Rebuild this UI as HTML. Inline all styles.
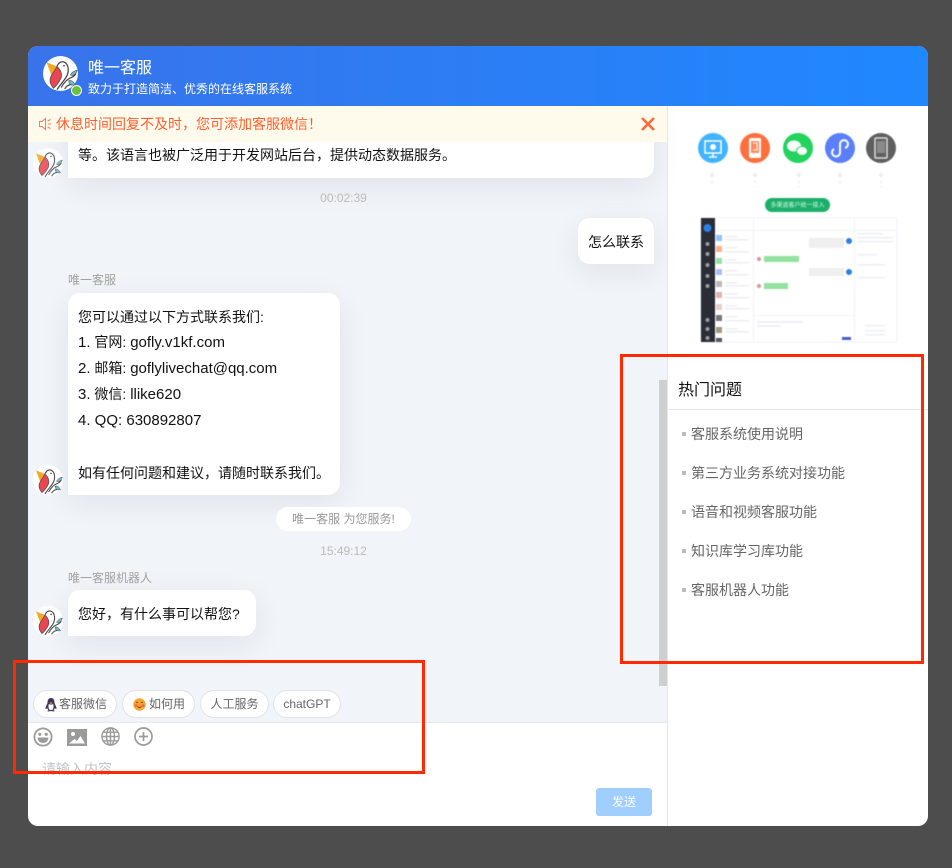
<!DOCTYPE html>
<html lang="zh"><head><meta charset="utf-8"><title>唯一客服</title>
<style>
*{box-sizing:border-box;margin:0;padding:0}
html,body{width:952px;height:868px;overflow:hidden;background:#4d4d4d;font-family:"Liberation Sans","Noto Sans CJK SC",sans-serif}
.a{position:absolute;white-space:nowrap}
#win{position:absolute;left:28px;top:46px;width:900px;height:780px;border-radius:10px;overflow:hidden;background:#fff}
.t{position:absolute;white-space:nowrap;line-height:20px}
.t b{font-weight:400;font-size:15px}
.bub{position:absolute;background:#fff;box-shadow:0 8px 30px rgba(30,50,90,.08);font-size:14px;color:#111}
.time{position:absolute;left:0;width:631px;text-align:center;font-size:12px;color:#bbb;line-height:16px}
.name{position:absolute;left:40px;font-size:12px;color:#a3a3a3;line-height:16px;white-space:nowrap}
.chip{position:absolute;top:644px;height:28px;border:1px solid #dfe3ea;border-radius:14px;background:#fff;font-size:12px;color:#666;line-height:26px;white-space:nowrap}
.q{position:absolute;left:663px;font-size:14px;color:#666;line-height:20px;white-space:nowrap}
.q:before{content:"";position:absolute;left:-9px;top:8px;width:4px;height:4px;background:#bbb}
.rb{position:absolute;border:3px solid #ff2a00}
</style></head><body>
<svg width="0" height="0" style="position:absolute"><defs>
<symbol id="bird" viewBox="0 0 100 100">
<circle cx="50" cy="50" r="50" fill="#fff"/>
<path d="M10 18L40 30L26 60Z" fill="#f7a823"/>
<path d="M40 30Q56 44 52 62Q44 80 30 92Q14 74 24 56Z" fill="#ea4552" stroke="#444" stroke-width="2"/>
<path d="M40 30Q46 14 60 17Q70 21 72 36Q74 54 58 72Q48 84 40 96" fill="none" stroke="#444" stroke-width="3.5"/>
<circle cx="60" cy="28" r="2.5" fill="#444"/>
<path d="M52 90Q64 68 80 62Q90 58 94 50M62 94Q70 80 84 82" fill="none" stroke="#444" stroke-width="3.5"/>
<path d="M78 54Q86 42 98 40Q94 54 84 56Z" fill="#72b6d4" stroke="#444" stroke-width="1.5"/>
<path d="M74 70Q84 68 92 82Q80 86 74 76Z" fill="#72b6d4" stroke="#444" stroke-width="1.5"/>
</symbol>
</defs></svg>
<div id="win">
<!-- chat area -->
<div style="position:absolute;left:0;top:60px;width:640px;height:617px;background:#f1f4f8"></div>

<div class="bub" style="left:40px;top:60px;width:586px;height:72px;border-radius:0 0 12px 0"><div class="t" style="left:10px;top:39px">等。该语言也被广泛用于开发网站后台，提供动态数据服务。</div></div>
<svg class="a" style="left:5px;top:102px;opacity:.85" width="30" height="30"><use href="#bird"/></svg>
<div class="time" style="top:144px">00:02:39</div>

<div class="bub" style="left:550px;top:172px;width:76px;height:46px;border-radius:12px 12px 0 12px"><div class="t" style="left:10px;top:14px">怎么联系</div></div>

<div class="name" style="top:226px">唯一客服</div>
<div class="bub" style="left:40px;top:247px;width:272px;height:202px;border-radius:12px 12px 12px 0">
<div class="t" style="left:10px;top:14px">您可以通过以下方式联系我们:</div>
<div class="t" style="left:10px;top:39px"><b>1.</b> 官网: <b>gofly.v1kf.com</b></div>
<div class="t" style="left:10px;top:65px"><b>2.</b> 邮箱: <b>goflylivechat@qq.com</b></div>
<div class="t" style="left:10px;top:91px"><b>3.</b> 微信: <b>llike620</b></div>
<div class="t" style="left:10px;top:117px"><b>4. QQ: 630892807</b></div>
<div class="t" style="left:10px;top:170px">如有任何问题和建议，请随时联系我们。</div>
</div>
<svg class="a" style="left:5px;top:419px" width="30" height="30"><use href="#bird"/></svg>

<div class="a" style="left:248px;top:461px;width:135px;height:24px;border-radius:12px;background:#fff;font-size:12px;color:#999;text-align:center;line-height:24px">唯一客服 为您服务!</div>
<div class="time" style="top:497px">15:49:12</div>

<div class="name" style="top:524px">唯一客服机器人</div>
<div class="bub" style="left:40px;top:544px;width:188px;height:46px;border-radius:12px 12px 12px 0"><div class="t" style="left:10px;top:14px">您好，有什么事可以帮您?</div></div>
<svg class="a" style="left:5px;top:560px" width="30" height="30"><use href="#bird"/></svg>

<!-- scrollbar -->
<div class="a" style="left:631px;top:334px;width:8px;height:306px;background:#cfcfcf"></div>

<!-- header -->
<div style="position:absolute;left:0;top:0;width:900px;height:60px;background:linear-gradient(90deg,#3973ea,#1f88ff)"></div>
<svg class="a" style="left:15px;top:10px" width="35" height="35"><use href="#bird"/></svg>
<div class="a" style="left:43px;top:39px;width:11px;height:11px;border-radius:50%;background:#6cc13c;border:1px solid #fff"></div>
<div class="t" style="left:60px;top:11px;font-size:16px;line-height:24px;color:#fff">唯一客服</div>
<div class="t" style="left:60px;top:33px;font-size:12px;color:#fff">致力于打造简洁、优秀的在线客服系统</div>

<!-- notice -->
<div style="position:absolute;left:0;top:60px;width:640px;height:36px;background:#fffbec"></div>
<svg class="a" style="left:10px;top:71px" width="14" height="14" viewBox="0 0 14 14" fill="none" stroke="#ff7a50" stroke-width="1"><path d="M1.5 4.5H4L7.5 1.5V12.5L4 9.5H1.5Z"/><path d="M9.5 4L12.5 2.5M9.5 7H13M9.5 10L12.5 11.5"/></svg>
<div class="t" style="left:28px;top:68px;font-size:14px;color:#ff5f2e">休息时间回复不及时，您可添加客服微信！</div>
<svg class="a" style="left:612px;top:71px" width="16" height="14" viewBox="0 0 16 14"><path d="M2 1L14 13M14 1L2 13" stroke="#ff6a3a" stroke-width="2.6"/></svg>

<!-- chips -->
<div class="chip" style="left:5px;width:84px;padding-left:25px">客服微信</div>
<svg class="a" style="left:16px;top:651px" width="14" height="15" viewBox="0 0 14 15"><path d="M7 1C4.5 1 3.5 3 3.500 5.500C3.500 7 1.500 9.500 1.500 11.500C1.500 12.500 2.500 12 3.200 11C3.500 12 4 12.700 4.600 13.200C3.500 13.500 3 14 3.500 14.300C5 14.700 6 14 7 14C8 14 9 14.700 10.500 14.300C11 14 10.500 13.500 9.400 13.200C10 12.700 10.500 12 10.800 11C11.500 12 12.500 12.500 12.500 11.500C12.500 9.500 10.500 7 10.500 5.500C10.500 3 9.500 1 7 1Z" fill="#3f3560"/><path d="M4.800 7Q7 8.200 9.200 7Q10 10 8.800 12.500Q7 13.500 5.200 12.500Q4 10 4.800 7Z" fill="#fff"/><path d="M5.500 6L7 5.200L8.500 6L7 7Z" fill="#f5a623"/></svg>
<div class="chip" style="left:94px;width:73px;padding-left:26px">如何用</div>
<svg class="a" style="left:105px;top:652px" width="13" height="13" viewBox="0 0 13 13"><circle cx="6.500" cy="6.500" r="6.200" fill="#f8a433"/><circle cx="3" cy="7.500" r="1.400" fill="#f2674a"/><circle cx="10" cy="7.500" r="1.400" fill="#f2674a"/><path d="M3 4.800Q4 3.600 5 4.800M8 4.800Q9 3.600 10 4.800M4.500 8.500Q6.500 10.500 8.500 8.500" fill="none" stroke="#7a4310" stroke-width=".9"/></svg>
<div class="chip" style="left:172px;width:69px;text-align:center">人工服务</div>
<div class="chip" style="left:245px;width:68px;text-align:center">chatGPT</div>

<!-- input -->
<div style="position:absolute;left:0;top:676px;width:640px;height:1px;background:#e8e8e8"></div>
<svg class="a" style="left:5px;top:681px" width="20" height="20" viewBox="0 0 20 20" fill="none"><circle cx="10" cy="10" r="8.600" stroke="#9b9b9b" stroke-width="1.800"/><circle cx="6.800" cy="7.300" r="1.600" fill="#9b9b9b"/><circle cx="13.200" cy="7.300" r="1.600" fill="#9b9b9b"/><path d="M4.500 10.500H15.500Q15 16 10 16Q5 16 4.500 10.500Z" fill="#9b9b9b"/></svg>
<svg class="a" style="left:39px;top:683px" width="20" height="17" viewBox="0 0 20 17"><path d="M0 0H20V17H0Z" fill="#9b9b9b"/><circle cx="6" cy="5" r="2" fill="#fff"/><path d="M2 14.500L7.500 10L10 12L13.500 7L18 14.500Z" fill="#fff"/></svg>
<svg class="a" style="left:73px;top:681px" width="19" height="19" viewBox="0 0 19 19" fill="none" stroke="#9b9b9b" stroke-width="1.400"><circle cx="9.500" cy="9.500" r="8.600"/><ellipse cx="9.500" cy="9.500" rx="4" ry="8.600"/><path d="M9.500 1V18M1 9.500H18M2.200 5.200H16.800M2.200 13.800H16.800"/></svg>
<svg class="a" style="left:106px;top:681px" width="19" height="19" viewBox="0 0 19 19" fill="none" stroke="#9b9b9b" stroke-width="1.700"><circle cx="9.500" cy="9.500" r="8.500"/><path d="M9.500 5V14M5 9.500H14"/></svg>
<div class="t" style="left:14px;top:713px;font-size:14px;color:#c0c4cc">请输入内容</div>
<div class="a" style="left:568px;top:742px;width:56px;height:28px;border-radius:3px;background:#a0cfff;color:#fff;font-size:12px;text-align:center;line-height:28px">发送</div>

<!-- right panel -->
<div style="position:absolute;left:639px;top:60px;width:1px;height:720px;background:#e6e6e6"></div>
<svg class="a" style="left:640px;top:60px;filter:blur(.5px)" width="260" height="250" viewBox="668 106 260 250">
<circle cx="713" cy="148" r="15" fill="#40b4ff"/><circle cx="755" cy="148" r="15" fill="#ff6f3c"/><circle cx="798" cy="148" r="15" fill="#22d35d"/><circle cx="840" cy="148" r="15" fill="#5a7ffa"/><circle cx="881" cy="148" r="15" fill="#5f5f5f"/>
<path d="M705 141H721V153H705Z" fill="none" stroke="#fff" stroke-width="1.500"/><circle cx="713" cy="147" r="3" fill="#fff"/><path d="M709 157H717M713 153V157" stroke="#fff" stroke-width="1.500"/>
<rect x="749" y="138" width="12" height="20" rx="1.500" fill="#fff"/><rect x="751" y="141" width="8" height="12" fill="#ff8a60"/><path d="M753 143H757V150H753" fill="none" stroke="#fff"/>
<ellipse cx="794" cy="146" rx="7" ry="5.500" fill="#fff"/><ellipse cx="802" cy="151" rx="5.500" ry="4.500" fill="#fff" stroke="#22d35d"/>
<path d="M834 149a4 4 0 1 0 6 4v-9a4 4 0 1 1 5 4" fill="none" stroke="#fff" stroke-width="2"/>
<rect x="875" y="138" width="12" height="20" rx="1" fill="none" stroke="#ddd" stroke-width="1.500"/><rect x="877" y="141" width="8" height="12" fill="#8a8a8a"/>
<g fill="#eee"><circle cx="712" cy="175" r="2.200"/><circle cx="755" cy="175" r="2.200"/><circle cx="799" cy="175" r="2.200"/><circle cx="840" cy="175" r="2.200"/><circle cx="881" cy="175" r="2.200"/><circle cx="712" cy="182" r="1.200"/><circle cx="755" cy="182" r="1.200"/><circle cx="799" cy="182" r="1.200"/><circle cx="840" cy="182" r="1.200"/><circle cx="881" cy="182" r="1.200"/><circle cx="712" cy="187" r=".7"/><circle cx="755" cy="187" r=".7"/><circle cx="799" cy="187" r=".7"/><circle cx="840" cy="187" r=".7"/><circle cx="881" cy="187" r=".7"/></g>
<rect x="765" y="198" width="65" height="14" rx="7" fill="#1bb069"/>
<text x="797.500" y="207" font-size="6" fill="#dff5ea" text-anchor="middle" font-family="'Liberation Sans','Noto Sans CJK SC',sans-serif">多渠道客户统一接入</text>
<rect x="701" y="218" width="196" height="124" fill="#fff" stroke="#f0f2fc"/>
<rect x="701" y="218" width="14" height="124" fill="#2a2c36"/>
<circle cx="707.500" cy="228" r="4" fill="#2f7fe8"/>
<g fill="#9a9ca4"><circle cx="707.500" cy="244" r="2"/><circle cx="707.500" cy="254" r="2"/><circle cx="707.500" cy="265" r="2"/><circle cx="707.500" cy="276" r="2"/><circle cx="707.500" cy="286" r="2"/><circle cx="707.500" cy="320" r="2"/><circle cx="707.500" cy="329" r="2"/><circle cx="707.500" cy="338" r="2"/></g>
<g fill="#f2f3f7"><path d="M715 230H897V231H715ZM753 218H754V342H753ZM854 218H855V342H854ZM753 315H854V316H753Z"/></g>
<rect x="716" y="235" width="6" height="6" fill="#8fc3ff"/><rect x="716" y="246" width="6" height="6" fill="#ffb08f"/><rect x="716" y="258" width="6" height="6" fill="#96e0a8"/><rect x="716" y="269" width="6" height="6" fill="#aabcff"/><rect x="716" y="281" width="6" height="6" fill="#b9b9b9"/><rect x="716" y="292" width="6" height="6" fill="#e0b4b4"/><rect x="716" y="304" width="6" height="6" fill="#e8cfc4"/><rect x="716" y="315" width="6" height="6" fill="#777"/><rect x="716" y="327" width="6" height="6" fill="#a09a80"/><rect x="716" y="338" width="6" height="4" fill="#556"/>
<g fill="#eceef2"><rect x="725" y="236" width="12" height="1.500"/><rect x="725" y="239" width="24" height="1.500"/><rect x="725" y="247" width="12" height="1.500"/><rect x="725" y="251" width="24" height="1.500"/><rect x="725" y="259" width="12" height="1.500"/><rect x="725" y="262" width="24" height="1.500"/><rect x="725" y="270" width="12" height="1.500"/><rect x="725" y="274" width="24" height="1.500"/><rect x="725" y="282" width="12" height="1.500"/><rect x="725" y="285" width="24" height="1.500"/><rect x="725" y="293" width="12" height="1.500"/><rect x="725" y="297" width="24" height="1.500"/><rect x="725" y="305" width="12" height="1.500"/><rect x="725" y="308" width="24" height="1.500"/><rect x="725" y="316" width="12" height="1.500"/><rect x="725" y="320" width="24" height="1.500"/><rect x="725" y="328" width="12" height="1.500"/><rect x="725" y="331" width="24" height="1.500"/></g>
<rect x="809" y="238" width="35" height="10" fill="#efefef"/><rect x="809" y="268" width="35" height="8" fill="#efefef"/>
<circle cx="849" cy="241" r="3" fill="#2f7fe8"/><circle cx="849" cy="272" r="3" fill="#2f7fe8"/>
<rect x="764" y="256" width="35" height="6" fill="#93e29f"/><rect x="764" y="283" width="24" height="6" fill="#93e29f"/>
<circle cx="759" cy="259" r="2" fill="#c99"/><circle cx="759" cy="286" r="2" fill="#c99"/>
<g fill="#eeeff3"><rect x="757" y="321" width="46" height="2"/><rect x="757" y="325" width="24" height="2"/><rect x="857" y="233" width="26" height="1.500"/><rect x="857" y="237" width="36" height="1.500"/><rect x="857" y="241" width="36" height="1.500"/><rect x="857" y="254" width="20" height="1.500"/><rect x="857" y="264" width="28" height="1.500"/><rect x="857" y="277" width="28" height="1.500"/><rect x="865" y="325" width="20" height="1.500"/><rect x="865" y="330" width="20" height="1.500"/><rect x="865" y="334" width="20" height="1.500"/></g>
<rect x="842" y="337" width="9" height="3" fill="#4a5fc1"/>
</svg>
<div class="t" style="left:650px;top:335px;font-size:16px;line-height:20px;color:#111">热门问题</div>
<div style="position:absolute;left:640px;top:363px;width:260px;height:1px;background:#e6e6e6"></div>
<div class="q" style="top:378px">客服系统使用说明</div>
<div class="q" style="top:417px">第三方业务系统对接功能</div>
<div class="q" style="top:456px">语音和视频客服功能</div>
<div class="q" style="top:495px">知识库学习库功能</div>
<div class="q" style="top:534px">客服机器人功能</div>
</div>
<div class="rb" style="left:620px;top:354px;width:304px;height:310px"></div>
<div class="rb" style="left:13px;top:660px;width:412px;height:114px"></div>
</body></html>
